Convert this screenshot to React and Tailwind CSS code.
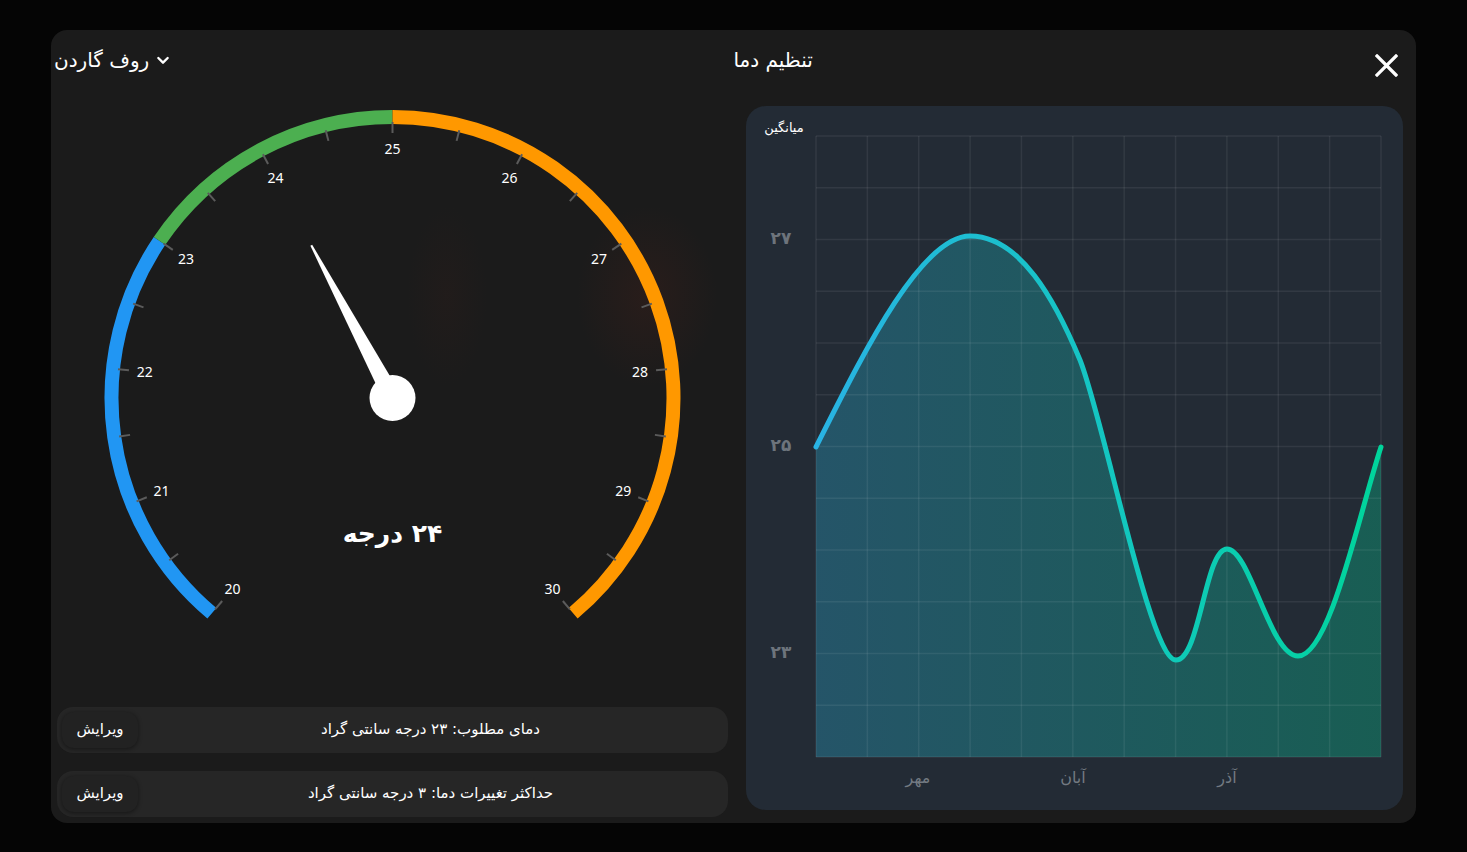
import React from "react";

const CX = 335.5;
const CY = 292;
function pt(r, deg) {
  const a = (deg * Math.PI) / 180;
  return [CX + r * Math.sin(a), CY - r * Math.cos(a)];
}
function arc(r, a1, a2) {
  const [x1, y1] = pt(r, a1);
  const [x2, y2] = pt(r, a2);
  const large = a2 - a1 > 180 ? 1 : 0;
  return `M${x1} ${y1} A${r} ${r} 0 ${large} 1 ${x2} ${y2}`;
}

function Gauge() {
  const ticks = [];
  for (let i = 0; i <= 20; i++) {
    const v = 20 + i * 0.5;
    const d = (v - 25) * 28;
    const [x1, y1] = pt(276, d);
    const [x2, y2] = pt(265, d);
    ticks.push(<line key={i} x1={x1} y1={y1} x2={x2} y2={y2} stroke="#5b5b5b" strokeWidth="2" />);
  }
  const labels = [];
  for (let v = 20; v <= 30; v++) {
    const d = (v - 25) * 28;
    const [x, y] = pt(249, d);
    labels.push(
      <text key={v} x={x} y={y + 5} textAnchor="middle" fill="#ffffff" fontSize="14" className="font-['Noto_Sans',sans-serif]">
        {v}
      </text>
    );
  }
  const na = (-28 * Math.PI) / 180;
  const nx = Math.cos(na);
  const ny = Math.sin(na);
  const [tx, ty] = pt(173, -28);
  const needle = [
    [tx + nx * 1, ty + ny * 1],
    [tx - nx * 1, ty - ny * 1],
    [CX - nx * 9, CY - ny * 9],
    [CX + nx * 9, CY + ny * 9],
  ]
    .map((p) => p.join(","))
    .join(" ");
  return (
    <svg width="671" height="601" viewBox="0 0 671 601" className="block">
      <defs>
        <radialGradient id="glow1" cx="0.5" cy="0.5" r="0.5">
          <stop offset="0" stopColor="#3a1f1a" stopOpacity="0.45" />
          <stop offset="1" stopColor="#3a1f1a" stopOpacity="0" />
        </radialGradient>
        <radialGradient id="glow2" cx="0.5" cy="0.5" r="0.5">
          <stop offset="0" stopColor="#2c1d1a" stopOpacity="0.35" />
          <stop offset="1" stopColor="#2c1d1a" stopOpacity="0" />
        </radialGradient>
      </defs>
      <ellipse cx="590" cy="190" rx="70" ry="90" fill="url(#glow1)" />
      <ellipse cx="390" cy="190" rx="40" ry="90" fill="url(#glow2)" />
      <path d={arc(281, -140, -56)} fill="none" stroke="#2196f3" strokeWidth="14" />
      <path d={arc(281, -56, 0)} fill="none" stroke="#4caf50" strokeWidth="14" />
      <path d={arc(281, 0, 140)} fill="none" stroke="#ff9800" strokeWidth="14" />
      {ticks}
      {labels}
      <polygon points={needle} fill="#ffffff" />
      <circle cx={CX} cy={CY} r="23" fill="#ffffff" />
      <text x={CX} y="436" textAnchor="middle" direction="rtl" fill="#ffffff" fontSize="25" fontWeight="700">
        ۲۴ درجه
      </text>
    </svg>
  );
}

function Chart() {
  const x0 = 70, x1 = 635, y0 = 30, y1 = 651;
  const vlines = [];
  for (let i = 0; i <= 11; i++) {
    const x = x0 + ((x1 - x0) * i) / 11;
    vlines.push(<line key={"v" + i} x1={x} y1={y0} x2={x} y2={y1} stroke="#ffffff" strokeOpacity="0.07" strokeWidth="1.5" />);
  }
  const hlines = [];
  for (let i = 0; i <= 12; i++) {
    const y = y0 + ((y1 - y0) * i) / 12;
    hlines.push(<line key={"h" + i} x1={x0} y1={y} x2={x1} y2={y} stroke="#ffffff" strokeOpacity="0.07" strokeWidth="1.5" />);
  }
  const curve =
    "M70,341 C114,254 174,130 224,130 C274,130 309,194 334,254 C358,314 404,554 430,554 C454,554 459,443 481,443 C504,443 524,550 552,550 C584,550 614,404 635,341";
  return (
    <svg width="657" height="704" viewBox="0 0 657 704" className="block">
      <defs>
        <linearGradient id="fillg" x1="0" y1="0" x2="1" y2="0">
          <stop offset="0" stopColor="#29b6e0" stopOpacity="0.3" />
          <stop offset="1" stopColor="#00d49a" stopOpacity="0.3" />
        </linearGradient>
        <linearGradient id="lineg" x1="70" y1="0" x2="635" y2="0" gradientUnits="userSpaceOnUse">
          <stop offset="0" stopColor="#29b3e4" />
          <stop offset="0.5" stopColor="#14c6c2" />
          <stop offset="1" stopColor="#00d49b" />
        </linearGradient>
      </defs>
      <path d={curve + " L635,651 L70,651 Z"} fill="url(#fillg)" />
      {vlines}
      {hlines}
      <path d={curve} fill="none" stroke="url(#lineg)" strokeWidth="5" strokeLinecap="round" />
      <text x="38" y="26" textAnchor="middle" fill="#ffffff" fontSize="13">
        میانگین
      </text>
      {[
        ["۲۷", 132],
        ["۲۵", 339],
        ["۲۳", 546],
      ].map(([t, y]) => (
        <text key={t} x="35" y={y + 6} textAnchor="middle" fill="#6d747c" fontSize="17" fontWeight="700">
          {t}
        </text>
      ))}
      {[
        ["مهر", 172],
        ["آبان", 327],
        ["آذر", 481],
      ].map(([t, x]) => (
        <text key={t} x={x} y="677" textAnchor="middle" fill="#737a82" fontSize="16">
          {t}
        </text>
      ))}
    </svg>
  );
}

function Row({ text }) {
  return (
    <div className="h-[46px] rounded-[16px] bg-[#262626] flex items-center px-[5px]">
      <button className="h-[36px] w-[76px] rounded-[12px] bg-[#222222] text-white text-[15px] shadow-[0_1px_4px_rgba(0,0,0,0.45)]">
        ویرایش
      </button>
      <div dir="rtl" className="flex-1 text-center text-white text-[15px]">
        {text}
      </div>
    </div>
  );
}

export default function App() {
  return (
    <div className="w-full h-[852px] bg-[#050505] flex items-center justify-center overflow-hidden font-['DejaVu_Sans','Noto_Sans',sans-serif]">
      <div className="w-[1365px] h-[793px] rounded-[16px] bg-[#1b1b1b] flex flex-col">
        <div className="h-[76px] flex items-start justify-between pl-[3px] pr-[18px]">
          <div className="mt-[15px] flex items-center gap-[6px] text-white text-[20px] leading-[30px]">
            <span dir="rtl">روف گاردن</span>
            <svg width="16" height="16" viewBox="0 0 24 24" fill="none" stroke="#ffffff" strokeWidth="3.5" strokeLinecap="round" strokeLinejoin="round">
              <path d="M5 9l7 7 7-7" />
            </svg>
          </div>
          <div dir="rtl" className="mt-[15px] text-white text-[20px] leading-[30px]">
            تنظیم دما
          </div>
          <svg className="mt-[24px]" width="23" height="23" viewBox="0 0 23 23" fill="none" stroke="#ffffff" strokeWidth="3.2" strokeLinecap="square">
            <path d="M2 2L21 21M21 2L2 21" />
          </svg>
        </div>
        <div className="flex items-start gap-[18px] pl-[6px] pr-[13px]">
          <div className="w-[671px] flex flex-col">
            <Gauge />
            <div className="flex flex-col gap-[18px]">
              <Row text="دمای مطلوب: ۲۳ درجه سانتی گراد" />
              <Row text="حداکثر تغییرات دما: ۳ درجه سانتی گراد" />
            </div>
          </div>
          <div className="w-[657px] h-[704px] rounded-[20px] bg-[#232b35] overflow-hidden">
            <Chart />
          </div>
        </div>
      </div>
    </div>
  );
}
